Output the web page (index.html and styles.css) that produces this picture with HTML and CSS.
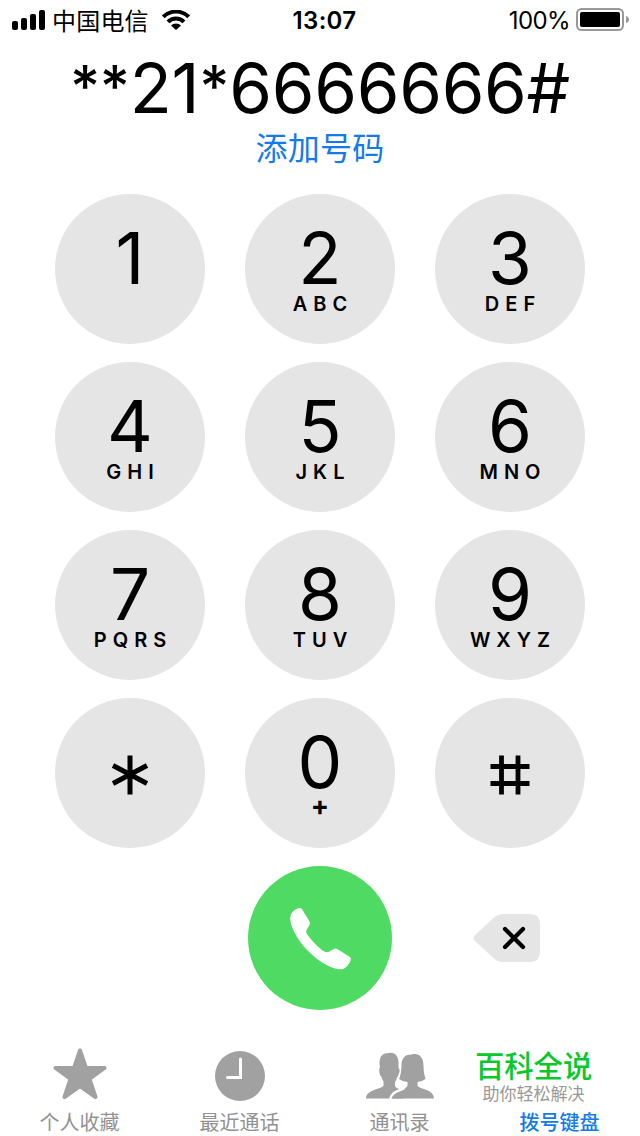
FILE: index.html
```html
<!DOCTYPE html>
<html lang="zh-CN">
<head>
  <meta charset="UTF-8">
  <meta name="viewport" content="width=device-width, initial-scale=1.0">
  <title>拨号键盘</title>
  <link rel="stylesheet" href="styles.css">
</head>
<body>
  <div class="phone">
    <!-- Status bar -->
    <header class="status">
      <div class="status-left">
        <svg class="signal" width="34" height="20" viewBox="0 0 34 20">
          <rect x="0" y="11" width="6" height="9" rx="2"/>
          <rect x="9" y="8" width="6" height="12" rx="2"/>
          <rect x="18" y="4" width="6" height="16" rx="2"/>
          <rect x="27" y="0" width="6" height="20" rx="2"/>
        </svg>
        <span class="carrier">中国电信</span>
        <svg class="wifi" width="28" height="20" viewBox="0 0 28 20">
          <path d="M1.300 6.800a18 18 0 0 1 25.400 0M6 11.900a11.400 11.400 0 0 1 16 0" fill="none" stroke="#000" stroke-width="4"/>
          <path d="M9 15.500a7 7 0 0 1 10 0L14 20z"/>
        </svg>
      </div>
      <div class="time">13:07</div>
      <div class="status-right">
        <span class="percent">100%</span>
        <svg width="53" height="24" viewBox="0 0 53 24">
          <rect x="1" y="1" width="46" height="21" rx="4.500" fill="none" stroke="#999" stroke-width="2"/>
          <rect x="4" y="4" width="40" height="15" rx="2"/>
          <path d="M50 8q3 1 3 3.500t-3 3.500z" fill="#999"/>
        </svg>
      </div>
    </header>

    <div class="number"><span class="star">**</span>21<span class="star">*</span>6666666#</div>
    <a class="add">添加号码</a>

    <!-- Keypad -->
    <div class="keypad">
      <button class="key"><span class="digit">1</span></button>
      <button class="key"><span class="digit">2</span><span class="letters">ABC</span></button>
      <button class="key"><span class="digit">3</span><span class="letters">DEF</span></button>
      <button class="key"><span class="digit">4</span><span class="letters">GHI</span></button>
      <button class="key"><span class="digit">5</span><span class="letters">JKL</span></button>
      <button class="key"><span class="digit">6</span><span class="letters">MNO</span></button>
      <button class="key"><span class="digit">7</span><span class="letters">PQRS</span></button>
      <button class="key"><span class="digit">8</span><span class="letters">TUV</span></button>
      <button class="key"><span class="digit">9</span><span class="letters">WXYZ</span></button>
      <button class="key symbol" aria-label="*">
        <svg width="40" height="40" viewBox="0 0 40 40">
          <path d="M20 .5v39M3 10.500l34 18M37 10.500l-34 18" fill="none" stroke="#000" stroke-width="5"/>
        </svg>
      </button>
      <button class="key"><span class="digit">0</span><span class="letters plus">+</span></button>
      <button class="key symbol" aria-label="#">
        <svg width="40" height="40" viewBox="0 0 40 40">
          <path d="M11.500 .5v39M28 .5v39M.5 11.500h39M.5 28.500h39" fill="none" stroke="#000" stroke-width="4.800"/>
        </svg>
      </button>
      <div></div>
      <button class="call" aria-label="呼叫">
        <svg width="64" height="64" viewBox="0 0 64 64">
          <path d="M5 3.500C8 1.200 11 .4 12.800 1.700Q15 5.500 20.500 14.300Q21.600 16.500 20 19Q17 23 17.200 25C17.500 28 32 44.500 37.500 45.300C40 45.300 43 42.500 45.500 41.700Q47 41.300 49 42.500L61 50Q62.500 51.300 61.500 53.500C60 57.500 57 61 54 62C49 63.500 39 59.500 31 54C18 45 7.500 32 3 20C.5 13 .2 7.500 5 3.500z" fill="#fff"/>
        </svg>
      </button>
      <button class="delete" aria-label="删除">
        <svg width="67" height="48" viewBox="0 0 67 48">
          <path d="M1.500 21.500L21 3.500Q25 0 30 0H57Q67 0 67 10V38Q67 48 57 48H30Q25 48 21 44.500L1.500 26.500Q-.8 24 1.500 21.500z" fill="#e5e5e5"/>
          <path d="M32 15l18 18M50 15L32 33" stroke="#000" stroke-width="4.200" stroke-linecap="round"/>
        </svg>
      </button>
    </div>

    <!-- Tab bar -->
    <nav class="tabs">
      <a class="tab">
        <svg width="56" height="54" viewBox="0 0 56 54">
          <path d="M28 3.500l6 17.500h18.500L37.500 32 43.500 50 28 39 12.500 50 18.500 32 3.500 21H22z" fill="#a1a1a1" stroke="#a1a1a1" stroke-width="4" stroke-linejoin="round"/>
        </svg>
        <span>个人收藏</span>
      </a>
      <a class="tab">
        <svg width="50" height="56" viewBox="0 0 50 56">
          <circle cx="25" cy="29" r="25" fill="#a1a1a1"/>
          <path d="M25.500 12v18.500H12.500" fill="none" stroke="#fff" stroke-width="3" stroke-linecap="round"/>
        </svg>
        <span>最近通话</span>
      </a>
      <a class="tab">
        <svg width="70" height="54" viewBox="0 -1.500 70 54">
          <path d="M46.500 6C54 4 58.500 9 58.500 17C58.500 23 59.500 27 60.500 30.500Q57 33 52.500 33.500V37C53.500 41 68.500 40 69 49.900H27C29 41.500 42 41 42.500 37V33.500Q37 33 34 30.500C36 26 36.300 22 36.500 17C36.500 9 40.500 6 46.500 6z" fill="#a1a1a1"/>
          <path d="M24 4.500C30 3.500 33.500 8 33.500 14V19.500Q35.500 21 34 25Q33 28 32 29Q31.500 32 30 33.500V37.500C31 40 37 41 42 45L38 49.900H1C1.500 40.500 17 41 18.500 37V33Q17 31 16.500 28.500Q14.500 27 14.300 23Q13.900 20 15 19C13.500 10 15.500 4.500 24 4.500z" fill="#a1a1a1"/>
          <path d="M25 51C27 42 35 42.500 39.500 39.500" fill="none" stroke="#fff" stroke-width="2.400"/>
        </svg>
        <span>通讯录</span>
      </a>
      <a class="tab active">
        <span>拨号键盘</span>
      </a>
      <div class="brand">
        <div class="brand-name">百科全说</div>
        <div class="brand-sub">助你轻松解决</div>
      </div>
    </nav>
  </div>
</body>
</html>
```

FILE: styles.css
```css
* {
  box-sizing: border-box;
}

body {
  margin: 0;
  background: #fff;
  color: #000;
  font-family: Inter, "Noto Sans CJK SC", sans-serif;
}

button {
  padding: 0;
  border: 0;
  font: inherit;
  color: inherit;
}

svg {
  display: block;
}

.phone {
  width: 640px;
  height: 1136px;
  display: flex;
  flex-direction: column;
  overflow: hidden;
}

/* Status bar */
.status {
  display: grid;
  grid-template-columns: 1fr auto 1fr;
  align-items: center;
  height: 40px;
  padding: 0 11px 0 12px;
}

.status-left,
.status-right {
  display: flex;
  align-items: center;
}

.status-right {
  justify-content: flex-end;
  gap: 6px;
}

.carrier {
  margin: 0 13px 0 6px;
  font: 24px/40px "Noto Sans CJK SC", sans-serif;
  letter-spacing: 0.2px;
}

.time {
  padding-left: 8px;
  font-size: 24px;
  font-weight: 600;
  letter-spacing: 0.3px;
}

.percent {
  font-size: 24px;
  letter-spacing: -0.6px;
}

/* Dialed number */
.number {
  height: 85px;
  font-size: 69px;
  line-height: 96px;
  letter-spacing: -0.3px;
  text-align: center;
  white-space: nowrap;
  font-feature-settings: "calt" 0;
}

.star {
  font-size: 58px;
  font-weight: 500;
  line-height: 0;
  vertical-align: 6px;
}

.add {
  height: 69px;
  font: 32px/43px "Noto Sans CJK SC", sans-serif;
  letter-spacing: 0.3px;
  text-align: center;
  color: #147be8;
}

/* Keypad */
.keypad {
  display: grid;
  grid-template-columns: repeat(3, 150px);
  gap: 18px 40px;
  justify-content: center;
  justify-items: center;
}

.key {
  display: flex;
  flex-direction: column;
  align-items: center;
  width: 150px;
  height: 150px;
  padding-top: 28px;
  border-radius: 50%;
  background: #e5e5e5;
}

.digit {
  font-size: 71px;
  line-height: 72px;
}

.letters {
  padding-left: 6px;
  font-size: 20px;
  font-weight: 600;
  line-height: 20px;
  letter-spacing: 6px;
}

.plus {
  font-size: 27px;
  font-weight: 700;
  line-height: 16px;
}

.symbol {
  padding-top: 57px;
}

.call {
  display: flex;
  align-items: center;
  justify-content: center;
  width: 144px;
  height: 144px;
  padding: 2px 0 0 2px;
  border-radius: 50%;
  background: #4fda64;
}

.delete {
  align-self: center;
  margin-right: 8px;
  background: none;
}

/* Tab bar */
.tabs {
  position: relative;
  display: grid;
  grid-template-columns: repeat(4, 1fr);
  height: 89px;
  margin-top: auto;
}

.tab {
  display: flex;
  flex-direction: column;
  align-items: center;
  justify-content: space-between;
  font: 20px/28px "Noto Sans CJK SC", sans-serif;
  color: #929292;
}

.tab span {
  margin-right: 1px;
}

.tab.active {
  justify-content: flex-end;
  font-weight: 500;
  color: #147be8;
}

.brand {
  position: absolute;
  top: -1px;
  left: 475px;
  font-family: "Noto Sans CJK SC", sans-serif;
  text-align: center;
}

.brand-name {
  font-size: 29.3px;
  font-weight: 500;
  line-height: 37px;
  color: #08c82c;
}

.brand-sub {
  font-size: 17px;
  line-height: 19px;
  color: #999;
}
```
